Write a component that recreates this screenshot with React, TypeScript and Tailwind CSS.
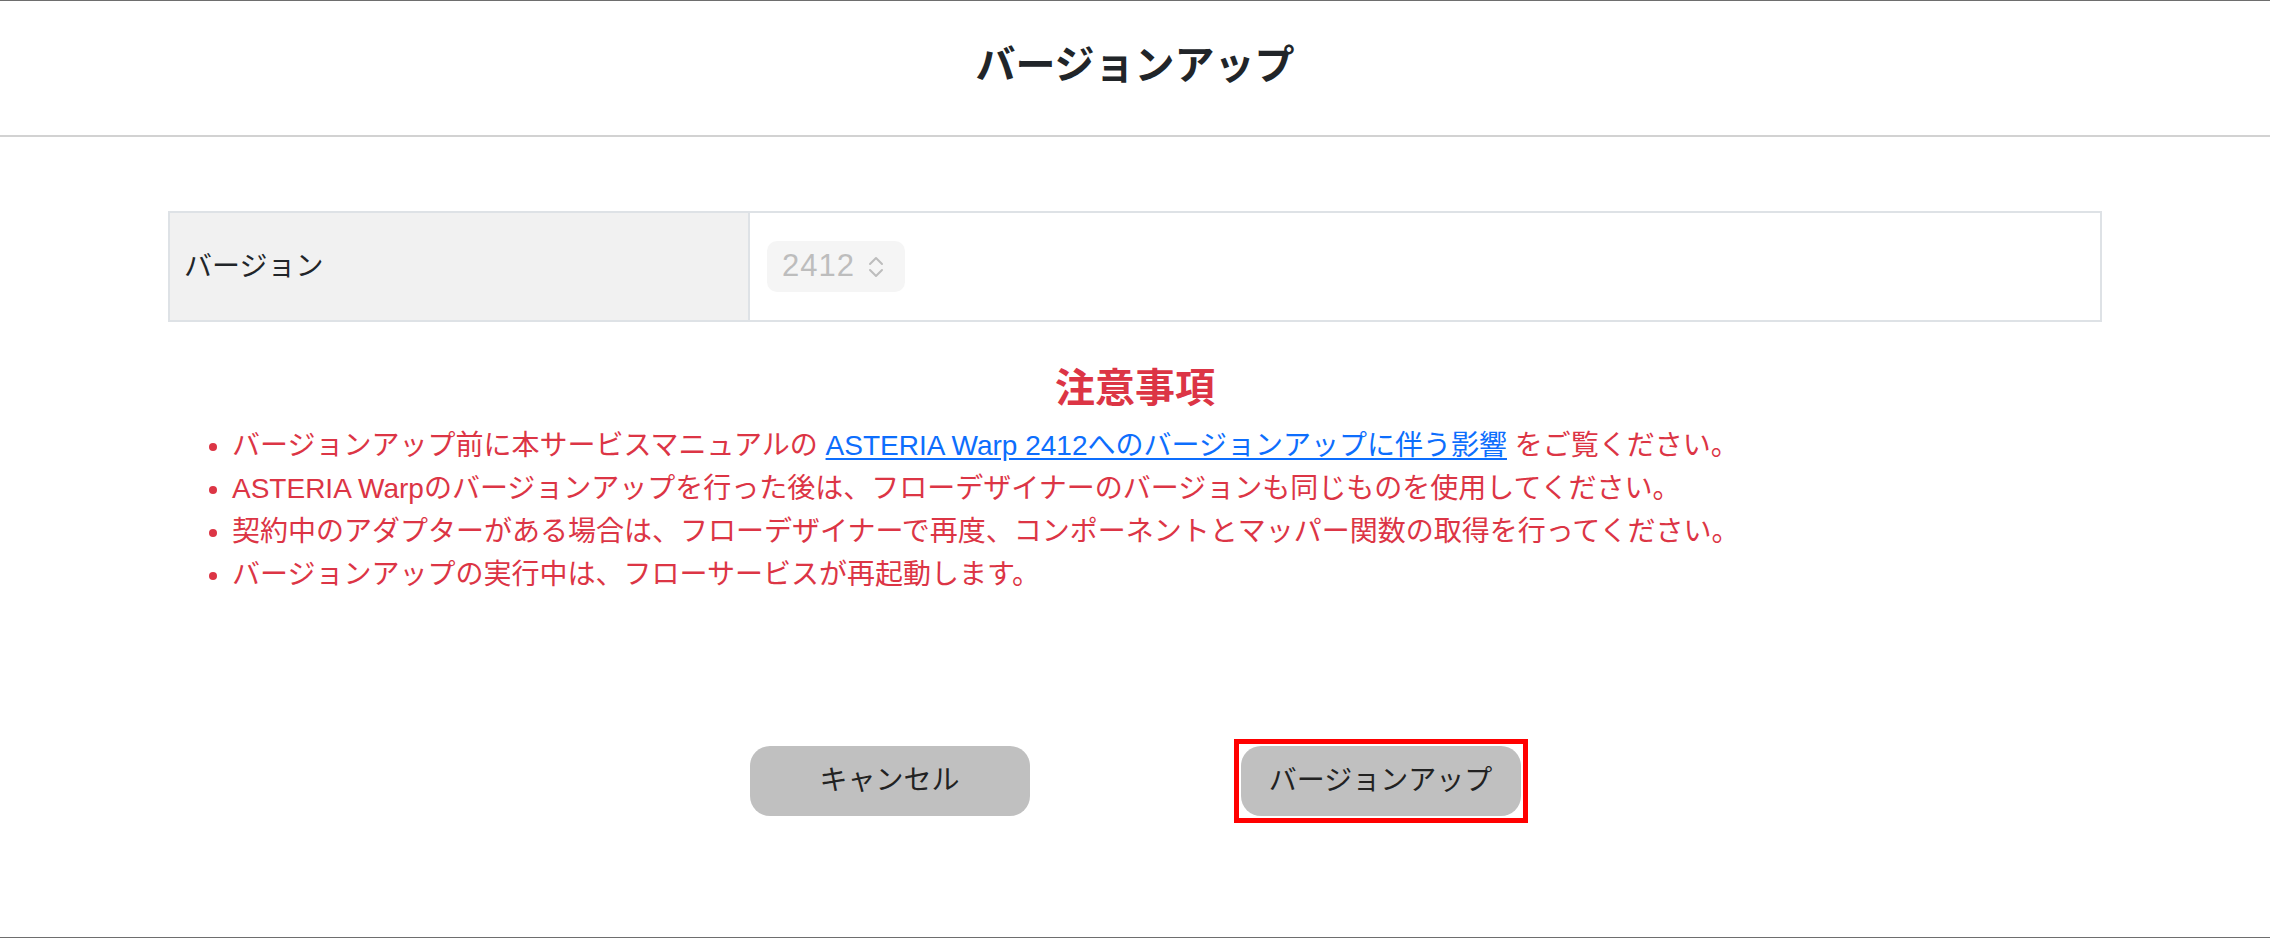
import * as React from "react";

const notes: React.ReactNode[] = [
  <>
    バージョンアップ前に本サービスマニュアルの{" "}
    <a href="#" className="text-[#0d6efd] underline underline-offset-[3px]">
      ASTERIA Warp 2412へのバージョンアップに伴う影響
    </a>{" "}
    をご覧ください。
  </>,
  "ASTERIA Warpのバージョンアップを行った後は、フローデザイナーのバージョンも同じものを使用してください。",
  "契約中のアダプターがある場合は、フローデザイナーで再度、コンポーネントとマッパー関数の取得を行ってください。",
  "バージョンアップの実行中は、フローサービスが再起動します。",
];

function UpDownIcon() {
  return (
    <svg width="16" height="26" viewBox="0 0 16 26" fill="none" stroke="#bdbdbd" strokeWidth="2" strokeLinecap="round" strokeLinejoin="round">
      <path d="M2 10 L8 4 L14 10" />
      <path d="M2 16 L8 22 L14 16" />
    </svg>
  );
}

export default function App() {
  const [version, setVersion] = React.useState("2412");

  return (
    <div
      className="flex h-[938px] w-full flex-col border-y border-[#6e6e6e] bg-white text-[#212529]"
      style={{ fontFamily: '"Liberation Sans", "Noto Sans CJK JP", sans-serif' }}
    >
      <header className="flex h-[136px] shrink-0 items-center justify-center border-b-2 border-[#d2d2d2] pb-[6px]">
        <h1 className="text-[40px] font-bold">バージョンアップ</h1>
      </header>

      <main className="flex flex-1 flex-col px-[168px] pt-[74px]">
        <div className="grid h-[111px] grid-cols-[580px_1fr] border-2 border-[#dee2e6]">
          <div className="flex items-center border-r-2 border-[#dee2e6] bg-[#f1f1f1] px-[14px] text-[28px]">
            バージョン
          </div>
          <div className="flex items-center pl-[17px]">
            <div className="flex h-[51px] w-[138px] items-center gap-[13px] rounded-[10px] bg-[#f5f5f5] pl-[15px] text-[31px] tracking-[1px] text-[#bdbdbd]">
              <span>{version}</span>
              <button onClick={() => setVersion(version)} className="flex items-center">
                <UpDownIcon />
              </button>
            </div>
          </div>
        </div>

        <h2 className="mt-[36px] text-center text-[40px] font-bold leading-[60px] text-[#dc3545]">注意事項</h2>

        <ul className="mt-[6px] list-outside list-disc pl-[64px] text-[28px] leading-[43px] text-[#dc3545]">
          {notes.map((n, i) => (
            <li key={i}>{n}</li>
          ))}
        </ul>

        <div className="mt-[143px] ml-[7px] flex items-center justify-center gap-[204px]">
          <button className="h-[70px] w-[280px] rounded-[20px] bg-[#c0c0c0] text-[28px] text-[#222]">
            キャンセル
          </button>
          <div className="border-[5px] border-[#ff0000] p-[2px]">
            <button className="block h-[70px] w-[280px] rounded-[20px] bg-[#c0c0c0] text-[28px] text-[#222]">
              バージョンアップ
            </button>
          </div>
        </div>
      </main>
    </div>
  );
}
